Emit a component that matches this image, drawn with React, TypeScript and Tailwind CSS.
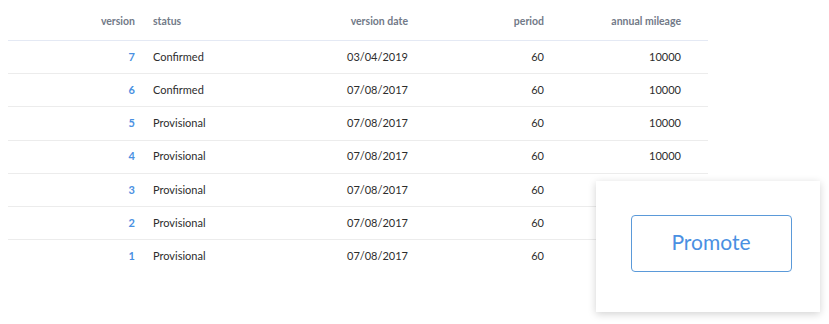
const ROWS = [
  { version: 7, status: 'Confirmed', date: '03/04/2019', period: 60, mileage: 10000 },
  { version: 6, status: 'Confirmed', date: '07/08/2017', period: 60, mileage: 10000 },
  { version: 5, status: 'Provisional', date: '07/08/2017', period: 60, mileage: 10000 },
  { version: 4, status: 'Provisional', date: '07/08/2017', period: 60, mileage: 10000 },
  { version: 3, status: 'Provisional', date: '07/08/2017', period: 60, mileage: 10000 },
  { version: 2, status: 'Provisional', date: '07/08/2017', period: 60, mileage: 10000 },
  { version: 1, status: 'Provisional', date: '07/08/2017', period: 60, mileage: 10000 },
]

export default function App() {
  return (
    <div className="relative w-[829px] h-[324px] bg-white font-['Lato','Liberation_Sans',sans-serif] text-[11px]">
      <div className="ml-2 w-[700px]">
        <div className="flex items-center h-[41px] pt-[3px] border-b border-[#e4e9f4] text-[#727a88] font-bold text-[10.5px]">
          <div className="w-[127px] text-right">version</div>
          <div className="w-[125px] pl-[18px]">status</div>
          <div className="w-[148px] text-right">version date</div>
          <div className="w-[136px] text-right">period</div>
          <div className="w-[137px] text-right">annual mileage</div>
        </div>
        {ROWS.map((r, i) => (
          <div
            key={r.version}
            className={`flex items-center h-[33.2px] text-[#2d2d2d] ${i < ROWS.length - 1 ? 'border-b border-[#ececec]' : ''}`}
          >
            <div className="w-[127px] text-right text-[#4a90e2] font-bold">{r.version}</div>
            <div className="w-[125px] pl-[18px]">{r.status}</div>
            <div className="w-[148px] text-right">{r.date}</div>
            <div className="w-[136px] text-right">{r.period}</div>
            <div className="w-[137px] text-right">{r.mileage}</div>
          </div>
        ))}
      </div>

      {/* promote popover sits over the table */}
      <div className="absolute left-[596px] top-[181px] w-[224px] h-[131px] bg-white shadow-[0_2px_8px_rgba(0,0,0,0.18)] flex items-start justify-center pt-[34px] pl-[6px]">
        <button className="w-[161px] h-[57px] pb-[3px] rounded-[4px] border border-[#5b9ad9] text-[#4a90e2] text-[21px] font-normal bg-white">
          Promote
        </button>
      </div>
    </div>
  )
}
